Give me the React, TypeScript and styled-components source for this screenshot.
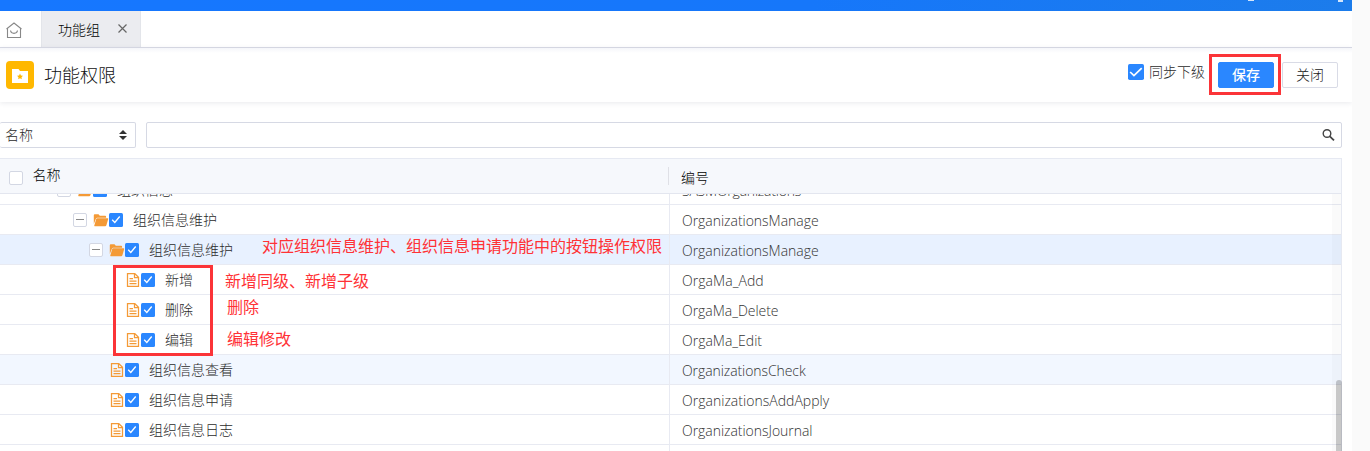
import React from "react";
import styled, { createGlobalStyle } from "styled-components";

const Global = createGlobalStyle`
  * { box-sizing: border-box; }
  html, body, #root { margin: 0; height: 100%; overflow: hidden; }
  body {
    font-family: "Open Sans", "Noto Sans CJK SC", sans-serif;
    font-size: 14px;
    font-weight: 300;
    color: #2b2b2b;
    background: #fafafa;
  }
`;

const Page = styled.div`
  position: relative;
  width: 1352px;
  height: 451px;
  overflow: hidden;
  background: #fff;
  display: flex;
  flex-direction: column;
`;

const TopBar = styled.div`
  flex: none;
  height: 11px;
  display: flex;
  justify-content: flex-end;
  gap: 84px;
  padding-right: 9px;
  background: linear-gradient(90deg, #1677ff, #1677fa 60%, #1c7ceb);
`;

const TopMark = styled.i<{ $w: number; $h: number }>`
  width: ${(p) => p.$w}px;
  height: ${(p) => p.$h}px;
  background: #d5e6fb;
`;

const TabBar = styled.nav`
  flex: none;
  height: 37px;
  display: flex;
  align-items: stretch;
  border-bottom: 1px solid #d9dbe6;
`;

const HomeTab = styled.div`
  width: 41px;
  padding: 11px 0 0 6px;
`;

const Tab = styled.div`
  width: 100px;
  display: flex;
  align-items: center;
  padding: 0 0 1px 16px;
  gap: 18px;
  color: #000;
  background: #ebecf0;
  border: solid #e3e5ea;
  border-width: 0 1px;
`;

const Header = styled.header`
  flex: none;
  height: 54px;
  display: flex;
  align-items: flex-start;
  padding: 13px 14px 0 6px;
  background: linear-gradient(#f5f6fa, #fff 5px);
  box-shadow: 0 1px 5px rgba(40, 50, 80, 0.1);
`;

const Title = styled.h1`
  flex: 1;
  margin: 0 0 0 10px;
  font-size: 18px;
  line-height: 28px;
  font-weight: 300;
  color: #111;
`;

const SyncOption = styled.label`
  display: flex;
  align-items: center;
  gap: 5px;
  height: 22px;
  margin-right: 13px;
  span { padding-bottom: 2px; }
`;

const Button = styled.button<{ $primary?: boolean }>`
  width: 56px;
  height: 26px;
  margin: 1px 0 0 ${(p) => (p.$primary ? 0 : 8)}px;
  padding: 0;
  font: inherit;
  font-weight: ${(p) => (p.$primary ? 500 : 300)};
  line-height: 24px;
  border-radius: 2px;
  border: 1px solid ${(p) => (p.$primary ? "#2a87ff" : "#d9dbe6")};
  color: ${(p) => (p.$primary ? "#fff" : "#222")};
  background: ${(p) => (p.$primary ? "#2a87ff" : "#fff")};
`;

const Filters = styled.div`
  flex: none;
  display: flex;
  gap: 10px;
  padding: 20px 10px 10px 0;
`;

const Field = styled.div<{ $w?: number }>`
  ${(p) => (p.$w ? `width: ${p.$w}px;` : "flex: 1;")}
  height: 26px;
  display: flex;
  align-items: center;
  justify-content: space-between;
  padding: 0 ${(p) => (p.$w ? 8 : 6)}px 0 5px;
  border: 1px solid #d6d9e4;
  border-radius: 2px;
  ${(p) => p.$w && "border-left: 0;"}
  span { padding-bottom: 2px; }
  svg { margin-left: auto; }
`;

const Table = styled.section`
  position: relative;
  flex: 1;
  min-height: 0;
  width: 1342px;
  display: flex;
  flex-direction: column;
  border: solid #e6e9f2;
  border-width: 1px 1px 0 0;
`;

const HeadRow = styled.div`
  flex: none;
  height: 35px;
  display: flex;
  background: #f6f8fc;
  border-bottom: 1px solid #e3e6ef;
  color: #000;
`;

const HeadName = styled.div`
  width: 669px;
  display: flex;
  align-items: flex-start;
  padding: 7px 0 0 9px;
  gap: 9.5px;
  line-height: 18px;
  background: linear-gradient(#dfe0e6, #dfe0e6) right 8px / 1px 18px no-repeat;
`;

const HeadCode = styled.div`
  padding: 10px 0 0 12px;
  line-height: 18px;
`;

const Body = styled.div`
  flex: 1;
  min-height: 0;
  overflow: hidden;
`;

const Rows = styled.div`
  margin-top: -19px;
`;

const Row = styled.div<{ $bg?: string }>`
  height: 30px;
  display: flex;
  background: ${(p) => p.$bg ?? "#fff"};
  border-bottom: 1px solid #e8eaf2;
`;

const NameCell = styled.div<{ $indent: number }>`
  width: 670px;
  display: flex;
  align-items: center;
  padding-left: ${(p) => p.$indent}px;
  border-right: 1px solid #e8eaf2;
`;

const CodeCell = styled.div<{ $ls?: number }>`
  padding: 1px 0 0 12px;
  line-height: 30px;
  letter-spacing: ${(p) => p.$ls ?? -0.03}px;
  color: #333;
`;

const NameText = styled.span`
  margin-left: 10px;
  padding-bottom: 2px;
`;

const Box = styled.span<{ $top?: number; $gap?: number }>`
  flex: none;
  width: 14px;
  height: 14px;
  margin-top: ${(p) => p.$top ?? 0}px;
  margin-right: ${(p) => p.$gap ?? 0}px;
  display: grid;
  place-items: center;
  border: 1px solid #d3d7e3;
  border-radius: 2px;
  background: #fff;
`;

const Minus = styled.i`
  width: 8px;
  height: 1px;
  background: #888;
`;

const Scrollbar = styled.div`
  position: absolute;
  right: 0;
  top: 35px;
  bottom: 0;
  width: 9px;
  background: rgba(0, 0, 0, 0.02);
`;

const Thumb = styled.div`
  position: absolute;
  right: -1px;
  top: 186px;
  bottom: 0;
  width: 6px;
  border-radius: 3px 3px 0 0;
  background: rgba(0, 0, 0, 0.2);
`;

const Note = styled.div<{ $x: number; $y: number }>`
  position: absolute;
  left: ${(p) => p.$x}px;
  top: ${(p) => p.$y}px;
  font-size: 16px;
  line-height: 20px;
  font-weight: 400;
  white-space: nowrap;
  color: #ff3236;
`;

const Marker = styled.div<{ $x: number; $y: number; $w: number; $h: number }>`
  position: absolute;
  left: ${(p) => p.$x}px;
  top: ${(p) => p.$y}px;
  width: ${(p) => p.$w}px;
  height: ${(p) => p.$h}px;
  border: 3px solid #fb3438;
`;

const Svg = styled.svg`
  flex: none;
  display: block;
`;

const HomeIcon = () => (
  <Svg width="16" height="17" viewBox="0 0 16 17" fill="none" stroke="#888" strokeWidth="1.100">
    <path d="M.5 7 8 1l7.500 6M1.500 6.300v9.200h13V6.300M4.500 8.500C5 12.300 11 12.300 11.500 8.500" />
  </Svg>
);

const CloseIcon = () => (
  <Svg width="9" height="9" viewBox="0 0 9 9" stroke="#666" strokeWidth="1.200">
    <path d="M.5.5l8 8M8.500.5l-8 8" />
  </Svg>
);

const TitleIcon = () => (
  <Svg width="28" height="28" viewBox="0 0 28 28">
    <rect width="28" height="28" rx="4" fill="#ffb800" />
    <path d="M6 8h6.500l1.500 2h8v12H6z" fill="#fff" />
    <path d="m14 12.600.9 1.800 2.100.3-1.500 1.500.3 2.100-1.800-1-1.800 1 .3-2.100-1.500-1.500 2.100-.3z" fill="#ffb800" />
  </Svg>
);

const Check = ({ size = 14 }: { size?: number }) => (
  <Svg width={size} height={size} viewBox="0 0 14 14">
    <rect width="14" height="14" rx="1.500" fill="#2a87ff" />
    {size > 14 ? (
      <path d="m1.900 7 3.300 3.200L12 3.600" fill="none" stroke="#fff" strokeWidth="1.500" />
    ) : (
      <path d="m3.200 6.800 2.600 2.700 4.900-6" fill="none" stroke="#fff" strokeWidth="1.300" />
    )}
  </Svg>
);

const FolderIcon = () => (
  <Svg width="16" height="14" viewBox="0 0 16 14" fill="#f49a36">
    <path d="M.8 11V2.200q0-.9.9-.9h3.800l1.300 1.500h5.400q.9 0 .9.900v1H4.300q-1 0-1.300.9z" />
    <path d="M4.200 5.300H14.700q.7 0 .5.700l-1.800 6.300q-.3.900-1.200.9H1.700q-.7 0-.4-.7L3.200 6.100q.3-.8 1-.8z" />
  </Svg>
);

const FileIcon = () => (
  <Svg width="14" height="14" viewBox="0 0 14 14" fill="none" stroke="#f49a36" strokeWidth="1.250">
    <path d="M1.500.6h7.300l3.700 3.700v9.100h-11zM8.500.8v3.900h3.800M3.500 5.500h3.500M3.500 8h7M3.500 10.500h7" />
  </Svg>
);

const SortIcon = () => (
  <Svg width="8" height="10" viewBox="0 0 8 10" fill="#333">
    <path d="M0 4 4 0l4 4zM0 6h8l-4 4z" />
  </Svg>
);

const SearchIcon = () => (
  <Svg width="13" height="12" viewBox="0 0 13 12" fill="none" stroke="#444">
    <circle cx="5" cy="4.500" r="3.800" strokeWidth="1.400" />
    <path d="m7.800 7.300 4.200 4" strokeWidth="1.800" />
  </Svg>
);

type Item = { name: string; code: string; indent: number; folder?: boolean; bg?: string; ls?: number };

const items: Item[] = [
  { name: "组织信息", code: "SASMOrganizations", indent: 57, folder: true, ls: -0.22 },
  { name: "组织信息维护", code: "OrganizationsManage", indent: 73, folder: true },
  { name: "组织信息维护", code: "OrganizationsManage", indent: 89, folder: true, bg: "#e8f1ff" },
  { name: "新增", code: "OrgaMa_Add", indent: 126, ls: 0.05 },
  { name: "删除", code: "OrgaMa_Delete", indent: 126 },
  { name: "编辑", code: "OrgaMa_Edit", indent: 126, ls: 0 },
  { name: "组织信息查看", code: "OrganizationsCheck", indent: 110, bg: "#f2f7ff", ls: -0.08 },
  { name: "组织信息申请", code: "OrganizationsAddApply", indent: 110, ls: 0.02 },
  { name: "组织信息日志", code: "OrganizationsJournal", indent: 110, ls: -0.04 },
  { name: "", code: "", indent: 110 },
];

const FileSlot = styled.span`
  width: 15px;
`;

const TreeRow = ({ item }: { item: Item }) => (
  <Row $bg={item.bg}>
    <NameCell $indent={item.indent}>
      {item.name && (
        <>
          {item.folder ? (
            <>
              <Box $gap={6}>
                <Minus />
              </Box>
              <FolderIcon />
            </>
          ) : (
            <FileSlot>
              <FileIcon />
            </FileSlot>
          )}
          <Check />
          <NameText>{item.name}</NameText>
        </>
      )}
    </NameCell>
    <CodeCell $ls={item.ls}>{item.code}</CodeCell>
  </Row>
);

export default function App() {
  return (
    <>
      <Global />
      <Page>
        <TopBar>
          <TopMark $w={6} $h={1} />
          <TopMark $w={5} $h={2} />
        </TopBar>
        <TabBar>
          <HomeTab>
            <HomeIcon />
          </HomeTab>
          <Tab>
            功能组
            <CloseIcon />
          </Tab>
        </TabBar>
        <Header>
          <TitleIcon />
          <Title>功能权限</Title>
          <SyncOption>
            <Check size={16} />
            <span>同步下级</span>
          </SyncOption>
          <Button $primary>保存</Button>
          <Button>关闭</Button>
        </Header>
        <Filters>
          <Field $w={136}>
            <span>名称</span>
            <SortIcon />
          </Field>
          <Field>
            <SearchIcon />
          </Field>
        </Filters>
        <Table>
          <HeadRow>
            <HeadName>
              <Box $top={5} />
              名称
            </HeadName>
            <HeadCode>编号</HeadCode>
          </HeadRow>
          <Body>
            <Rows>
              {items.map((item, i) => (
                <TreeRow key={i} item={item} />
              ))}
            </Rows>
          </Body>
          <Scrollbar>
            <Thumb />
          </Scrollbar>
        </Table>
        <Note $x={262} $y={236}>对应组织信息维护、组织信息申请功能中的按钮操作权限</Note>
        <Note $x={225} $y={271}>新增同级、新增子级</Note>
        <Note $x={227} $y={297}>删除</Note>
        <Note $x={227} $y={329}>编辑修改</Note>
        <Marker $x={1209} $y={54} $w={72} $h={41} />
        <Marker $x={113} $y={265} $w={100} $h={91} />
      </Page>
    </>
  );
}
